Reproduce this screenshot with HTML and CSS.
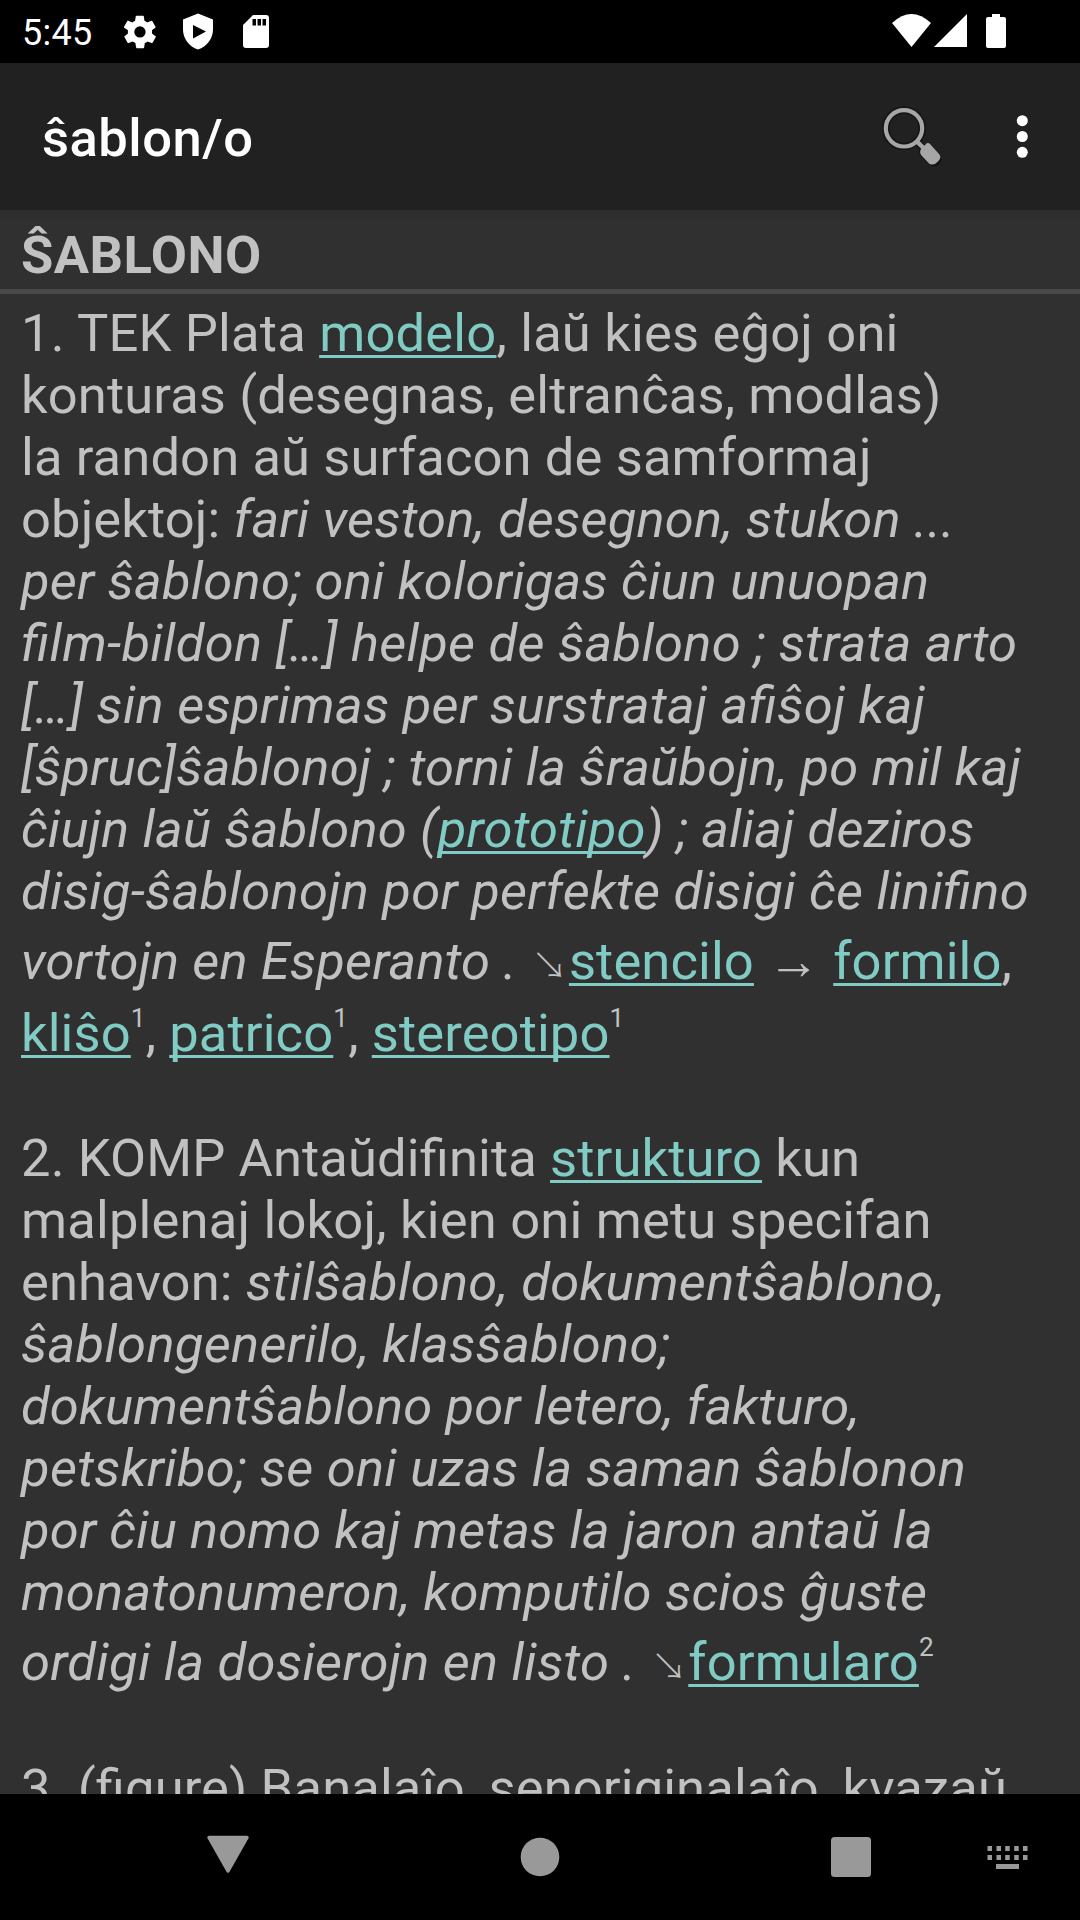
FILE: index.html
```html
<!DOCTYPE html>
<html lang="eo"><head><meta charset="utf-8"><title>ŝablon/o</title><link rel="stylesheet" href="styles.css"></head>
<body>
<div class="screen">
<header class="status"><span class="clock">5:45</span>
<svg class="s-left" width="170" height="62" viewBox="110 0 170 62"><g fill="#fff"><path transform="translate(120.500 12.500) scale(1.62)" d="M19.4 13c0-.3.1-.6.1-1s0-.7-.1-1l2.100-1.600c.2-.2.3-.4.1-.6l-2-3.500c-.1-.2-.4-.3-.6-.2l-2.500 1a7.300 7.300 0 0 0-1.700-1l-.4-2.600c0-.3-.2-.5-.5-.5h-4c-.3 0-.5.2-.5.400l-.4 2.700c-.6.200-1.100.6-1.700 1l-2.500-1c-.2-.1-.5 0-.6.200l-2 3.500c-.1.200-.1.400.1.600L4.600 11a8 8 0 0 0 0 2l-2.100 1.600c-.2.200-.3.400-.1.600l2 3.500c.1.200.4.300.6.200l2.500-1c.5.400 1.100.700 1.700 1l.4 2.600c0 .3.200.5.500.5h4c.3 0 .5-.2.500-.4l.4-2.700c.6-.2 1.100-.6 1.700-1l2.500 1c.2.100.5 0 .6-.2l2-3.500c.1-.2.100-.4-.1-.6zM12 15.500a3.500 3.500 0 1 1 0-7 3.500 3.500 0 0 1 0 7z"/><path fill-rule="evenodd" d="M198 13.500l15 6v10c0 9-6 17-15 20-9-3-15-11-15-20v-10zM193 25v13.500l13-7z"/><path fill-rule="evenodd" d="M253 15h13q3 0 3 3v27q0 3-3 3h-20q-3 0-3-3V25zM252.500 19v6.500h3.500V19zm5 0v6.500h3.500V19zm5 0v6.500h3.500V19z"/></g></svg>
<svg class="s-right" width="130" height="62" viewBox="885 0 130 62"><g fill="#fff"><path d="M892 23q19.500-18 39 0L911.500 47z"/><path d="M967 14v33h-33z"/><path d="M986 19q0-2 2-2h4v-3h8v3h4q2 0 2 2v27q0 2-2 2h-16q-2 0-2-2z"/></g></svg></header>
<div class="bar"><h1>ŝablon/o</h1>
<svg width="210" height="147" viewBox="870 63 210 147"><g stroke="#151515"><circle cx="904" cy="128.300" r="18.200" fill="none" stroke-width="7.500"/><path d="M917 142l9 9" stroke-width="8"/><path d="M926.500 151.500l7.500 7.500" stroke-width="15" stroke-linecap="round"/></g><g stroke="#a6a6a6"><circle cx="904" cy="128.300" r="18.200" fill="none" stroke-width="4.200"/><path d="M917 141.500l8 8" stroke-width="4.500"/></g><path d="M921 149l5-5q2-2 4.500.5l8.500 9.500q3 3-.5 7t-7 3.500l-2-.5-8-8.500q-2.500-3-.500-6.500z" fill="#a6a6a6"/><g fill="#fff"><circle cx="1022.300" cy="120.700" r="5.500"/><circle cx="1022.300" cy="136.500" r="5.500"/><circle cx="1022.300" cy="152.300" r="5.500"/></g></svg></div>
<main><h2>ŜABLONO</h2><div class="text">
<p class="loose">1. TEK Plata <a>modelo</a>, laŭ kies eĝoj oni</p>
<p>konturas (desegnas, eltranĉas, modlas)</p>
<p>la randon aŭ surfacon de samformaj</p>
<p class="tight">objektoj: <i>fari veston, desegnon, stukon ...</i></p>
<p class="tight"><i>per ŝablono; oni kolorigas ĉiun unuopan</i></p>
<p><i>film-bildon […] helpe de ŝablono ; strata arto</i></p>
<p><i>[…] sin esprimas per surstrataj afiŝoj kaj</i></p>
<p class="tight"><i>[ŝpruc]ŝablonoj ; torni la ŝraŭbojn, po mil kaj</i></p>
<p class="tight"><i>ĉiujn laŭ ŝablono (<a>prototipo</a>) ; aliaj deziros</i></p>
<p><i>disig-ŝablonojn por perfekte disigi ĉe linifino</i></p>
<p class="arrows tighter"><i>vortojn en Esperanto .</i> <span class="arrow down">↘</span><a>stencilo</a> <span class="arrow right">→</span> <a>formilo</a>,</p>
<p class="refs"><a>kliŝo</a><sup>1</sup>, <a>patrico</a><sup>1</sup>, <a>stereotipo</a><sup>1</sup></p>
<p class="sense">2. KOMP Antaŭdifinita <a>strukturo</a> kun</p>
<p class="loose">malplenaj lokoj, kien oni metu specifan</p>
<p>enhavon: <i>stilŝablono, dokumentŝablono,</i></p>
<p><i>ŝablongenerilo, klasŝablono;</i></p>
<p class="tighter"><i>dokumentŝablono por letero, fakturo,</i></p>
<p><i>petskribo; se oni uzas la saman ŝablonon</i></p>
<p class="tighter"><i>por ĉiu nomo kaj metas la jaron antaŭ la</i></p>
<p class="tight"><i>monatonumeron, komputilo scios ĝuste</i></p>
<p class="arrows"><i>ordigi la dosierojn en listo .</i> <span class="arrow down">↘</span><a>formularo</a><sup>2</sup></p>
<p class="sense last">3. (figure) Banalaĵo, senoriginalaĵo, kvazaŭ</p>
</div></main>
<nav><svg width="1080" height="126" viewBox="0 1794 1080 126"><g fill="#999"><path d="M209 1837.500h38L228 1871z" stroke="#999" stroke-width="3.500" stroke-linejoin="round"/><circle cx="540" cy="1857" r="19.300"/><rect x="831" y="1837" width="40" height="40" rx="3.500"/><path d="M987.500 1846h4.500v5h-4.500zm9 0h4.500v5h-4.500zm8.700 0h4.500v5h-4.500zm9 0h4.500v5h-4.500zm8.800 0h4.500v5h-4.500zM987.500 1855h4.500v5h-4.500zm9 0h4.500v5h-4.500zm8.700 0h4.500v5h-4.500zm9 0h4.500v5h-4.500zm8.800 0h4.500v5h-4.500zM996 1864h23v5h-23z"/></g></svg></nav>
</div></body></html>
```
FILE: styles.css
```css
body{margin:0;background:#303030}
.screen{width:1080px;height:1920px;overflow:hidden;display:flex;flex-direction:column;font-family:Roboto,sans-serif;color:#c1c1c1}
.status{height:63px;flex:none;background:#000;display:flex;color:#fff}
.clock{font-size:36px;letter-spacing:.3px;line-height:66px;padding-left:22px;width:88px}
.s-right{margin-left:auto;margin-right:65px}
.bar{height:147px;flex:none;background:#212121;display:flex;justify-content:space-between}
h1{margin:0;padding-left:42px;font-size:52.500px;letter-spacing:.5px;font-weight:500;line-height:151px;color:#fff}
main{flex:1;min-height:0;overflow:hidden;background:linear-gradient(#2c2c2c,#303030 10px)}
h2{margin:0;height:79px;padding-left:21px;font-size:52.500px;letter-spacing:.5px;line-height:90px;border-bottom:5px solid #484848}
p{margin:0;height:62px;font-size:52.500px;line-height:62px;white-space:pre;letter-spacing:.12px;font-feature-settings:"liga" 1}
i{letter-spacing:.28px}
.loose{letter-spacing:.19px}
.tight i{letter-spacing:.2px}
.tighter i{letter-spacing:.14px}
.text{padding:8px 21px 0}
a{color:#80cbc4;text-decoration:underline;text-decoration-thickness:3px;text-underline-offset:4px;text-decoration-skip-ink:none}
sup{font-size:26.250px;line-height:0;vertical-align:24px}
.arrows{margin-top:8px}
.refs{margin-top:10px}
.sense{margin-top:63px}
.last{margin-top:64px}
.arrow{display:inline-flex;justify-content:center;line-height:0;font-family:"Liberation Serif",serif;font-size:52px}
.down{width:39px;font-family:"Noto Sans CJK JP","DejaVu Sans",sans-serif;font-weight:200;font-size:36px}
.right{width:53px}
nav{height:126px;flex:none;background:#000}
```
